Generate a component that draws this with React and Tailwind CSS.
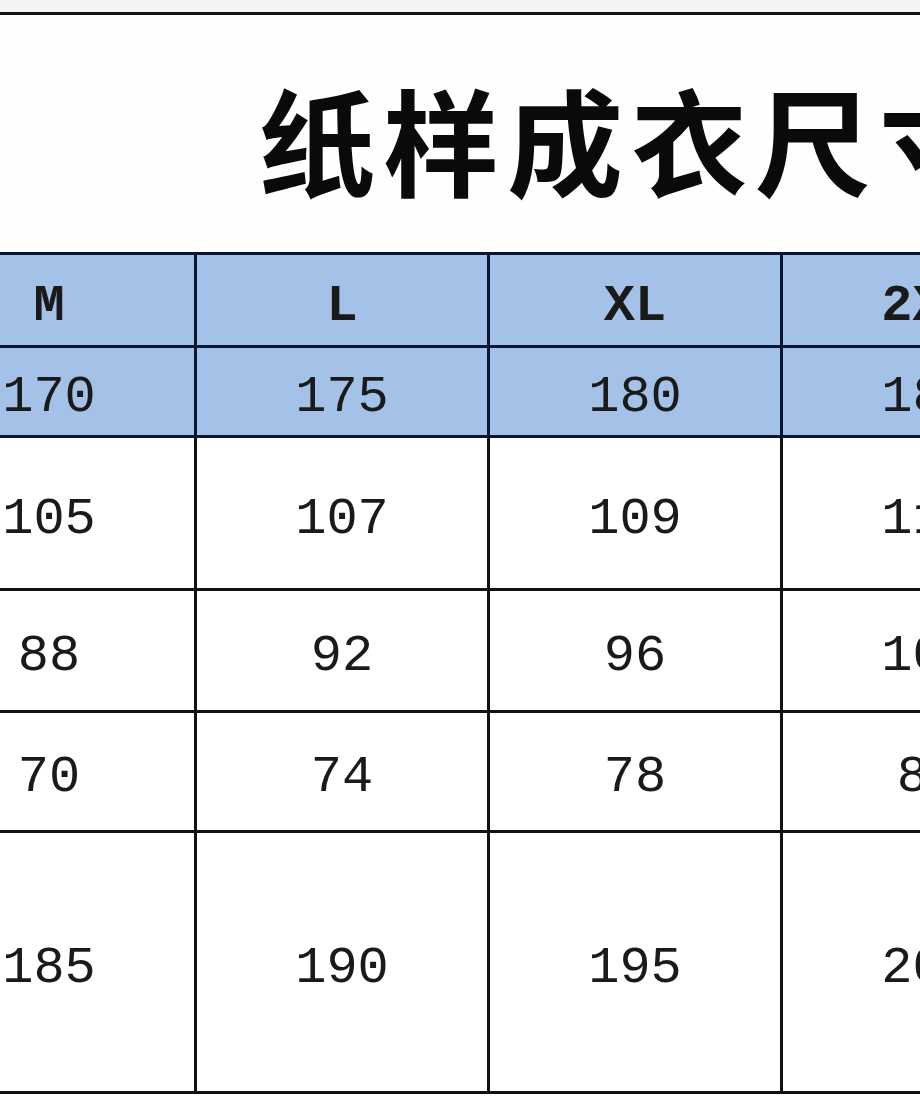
const columns = ["M", "L", "XL", "2XL"];

const rows = [
    { h: "h-[93px]", blue: true, bold: true, cells: ["M", "L", "XL", "2XL"] },
    { h: "h-[90px]", blue: true, cells: ["170", "175", "180", "185"] },
    { h: "h-[153px]", cells: ["105", "107", "109", "111"] },
    { h: "h-[122px]", cells: ["88", "92", "96", "100"] },
    { h: "h-[120px]", cells: ["70", "74", "78", "82"] },
    { h: "h-[261px]", cells: ["185", "190", "195", "200"] },
];

const Row = ({ row }) => (
    <div className={`flex ${row.h}`}>
        {row.cells.map((value, i) => (
            <div
                key={columns[i]}
                className={`w-[293px] shrink-0 flex items-center justify-center pt-[13px] border-r-[3px] border-b-[3px] ${
                    row.blue ? 'bg-[#a4c2e7] border-[#0b1632]' : 'bg-white border-[#111]'
                }`}
            >
                <span
                    className={`text-[52px] leading-none text-[#1a1a1a] ${row.bold ? 'font-bold' : 'font-normal'}`}
                    style={{ fontFamily: '"Liberation Mono", "DejaVu Sans Mono", monospace' }}
                >
                    {value}
                </span>
            </div>
        ))}
    </div>
);

const App = () => {
    return (
        <div className="w-[920px] h-[1104px] overflow-hidden bg-white">
            {/* top edge of sheet */}
            <div className="h-[12px] bg-[#f4f4f4]"></div>
            <div className="h-[3px] bg-[#141414]"></div>

            {/* title */}
            <div className="h-[237px] bg-[#fefefe] pl-[259px] pt-[64px] overflow-hidden">
                <h1
                    className="text-[116px] leading-none font-bold tracking-[8px] text-[#0a0a0a] whitespace-nowrap"
                    style={{ fontFamily: '"Noto Sans CJK SC", sans-serif' }}
                >
                    纸样成衣尺寸
                </h1>
            </div>

            {/* size table */}
            <div className="ml-[-96px] w-[1200px] border-t-[3px] border-[#0b1632]">
                {rows.map((row, i) => (
                    <Row key={i} row={row} />
                ))}
            </div>
        </div>
    );
};

export default App;
